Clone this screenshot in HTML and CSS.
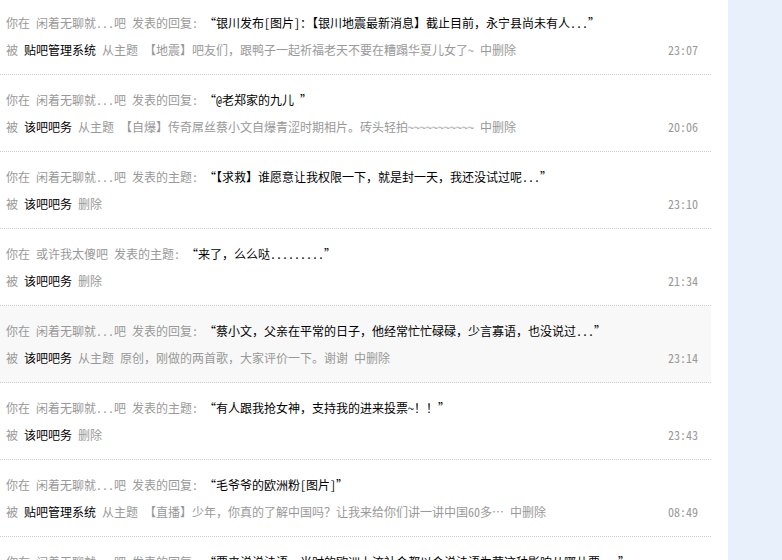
FILE: index.html
```html
<!DOCTYPE html>
<html lang="zh">
<head>
<meta charset="utf-8">
<link rel="stylesheet" href="styles.css">
</head>
<body>
<div class="page">
  <ul class="feed">
    <li class="item">
      <div class="line"><span class="g">你在</span><span class="g">闲着无聊就...吧</span><span class="g">发表的回复:</span><span class="q">“银川发布[图片]：【银川地震最新消息】截止目前，永宁县尚未有人...”</span></div>
      <div class="line meta"><div class="info"><span class="g">被</span><span class="k">贴吧管理系统</span><span class="g">从主题</span><span class="g">【地震】吧友们，跟鸭子一起祈福老天不要在糟蹋华夏儿女了~</span><span class="g">中删除</span></div><span class="time">23:07</span></div>
    </li>
    <li class="item">
      <div class="line"><span class="g">你在</span><span class="g">闲着无聊就...吧</span><span class="g">发表的回复:</span><span class="q">“@老郑家的九儿 ”</span></div>
      <div class="line meta"><div class="info"><span class="g">被</span><span class="k">该吧吧务</span><span class="g">从主题</span><span class="g">【自爆】传奇屌丝蔡小文自爆青涩时期相片。砖头轻拍~~~~~~~~~~~</span><span class="g">中删除</span></div><span class="time">20:06</span></div>
    </li>
    <li class="item">
      <div class="line"><span class="g">你在</span><span class="g">闲着无聊就...吧</span><span class="g">发表的主题:</span><span class="q">“【求救】谁愿意让我权限一下，就是封一天，我还没试过呢...”</span></div>
      <div class="line meta"><div class="info"><span class="g">被</span><span class="k">该吧吧务</span><span class="g">删除</span></div><span class="time">23:10</span></div>
    </li>
    <li class="item">
      <div class="line"><span class="g">你在</span><span class="g">或许我太傻吧</span><span class="g">发表的主题:</span><span class="q">“来了，么么哒.........”</span></div>
      <div class="line meta"><div class="info"><span class="g">被</span><span class="k">该吧吧务</span><span class="g">删除</span></div><span class="time">21:34</span></div>
    </li>
    <li class="item hover">
      <div class="line"><span class="g">你在</span><span class="g">闲着无聊就...吧</span><span class="g">发表的回复:</span><span class="q">“蔡小文，父亲在平常的日子，他经常忙忙碌碌，少言寡语，也没说过...”</span></div>
      <div class="line meta"><div class="info"><span class="g">被</span><span class="k">该吧吧务</span><span class="g">从主题</span><span class="g">原创，刚做的两首歌，大家评价一下。谢谢</span><span class="g">中删除</span></div><span class="time">23:14</span></div>
    </li>
    <li class="item">
      <div class="line"><span class="g">你在</span><span class="g">闲着无聊就...吧</span><span class="g">发表的主题:</span><span class="q">“有人跟我抢女神，支持我的进来投票~！！”</span></div>
      <div class="line meta"><div class="info"><span class="g">被</span><span class="k">该吧吧务</span><span class="g">删除</span></div><span class="time">23:43</span></div>
    </li>
    <li class="item">
      <div class="line"><span class="g">你在</span><span class="g">闲着无聊就...吧</span><span class="g">发表的回复:</span><span class="q">“毛爷爷的欧洲粉[图片]”</span></div>
      <div class="line meta"><div class="info"><span class="g">被</span><span class="k">贴吧管理系统</span><span class="g">从主题</span><span class="g">【直播】少年，你真的了解中国吗？让我来给你们讲一讲中国60多…</span><span class="g">中删除</span></div><span class="time">08:49</span></div>
    </li>
    <li class="item">
      <div class="line"><span class="g">你在</span><span class="g">闲着无聊就...吧</span><span class="g">发表的回复:</span><span class="q">“要来说说法语，当时的欧洲上流社会都以会说法语为荣这种影响从哪儿要...”</span></div>
      <div class="line meta"><div class="info"><span class="g">被</span><span class="k">该吧吧务</span><span class="g">删除</span></div><span class="time">23:02</span></div>
    </li>
  </ul>
  <div class="gap"></div>
  <aside class="side"></aside>
</div>
</body>
</html>
```
FILE: styles.css
```css
html, body {
  margin: 0;
  padding: 0;
  background: #fff;
}
body {
  font-family: "Noto Sans Mono CJK SC", "Noto Sans CJK SC", sans-serif;
  font-size: 12px;
  color: #999;
  overflow: hidden;
  height: 560px;
}
.page {
  display: grid;
  grid-template-columns: 711px 17px 1fr;
  height: 560px;
}
.feed {
  list-style: none;
  margin: -2px 0 0;
  padding: 0;
}
.item {
  padding: 11px 13px 11px 6px;
  border-bottom: 1px dotted #cfcfcf;
}
.item.hover {
  background: #f8f8f8;
}
.line {
  line-height: 27px;
  height: 27px;
  white-space: nowrap;
  overflow: hidden;
}
.meta {
  display: flex;
  justify-content: space-between;
}
.info {
  display: flex;
}
.g, .k, .q {
  margin-right: 6px;
}
.g { color: #999; }
.k { color: #000; }
.q { color: #000; }
.time {
  color: #999;
  font-size: 12px;
}
.side {
  background: #e8f0fb;
}
```
